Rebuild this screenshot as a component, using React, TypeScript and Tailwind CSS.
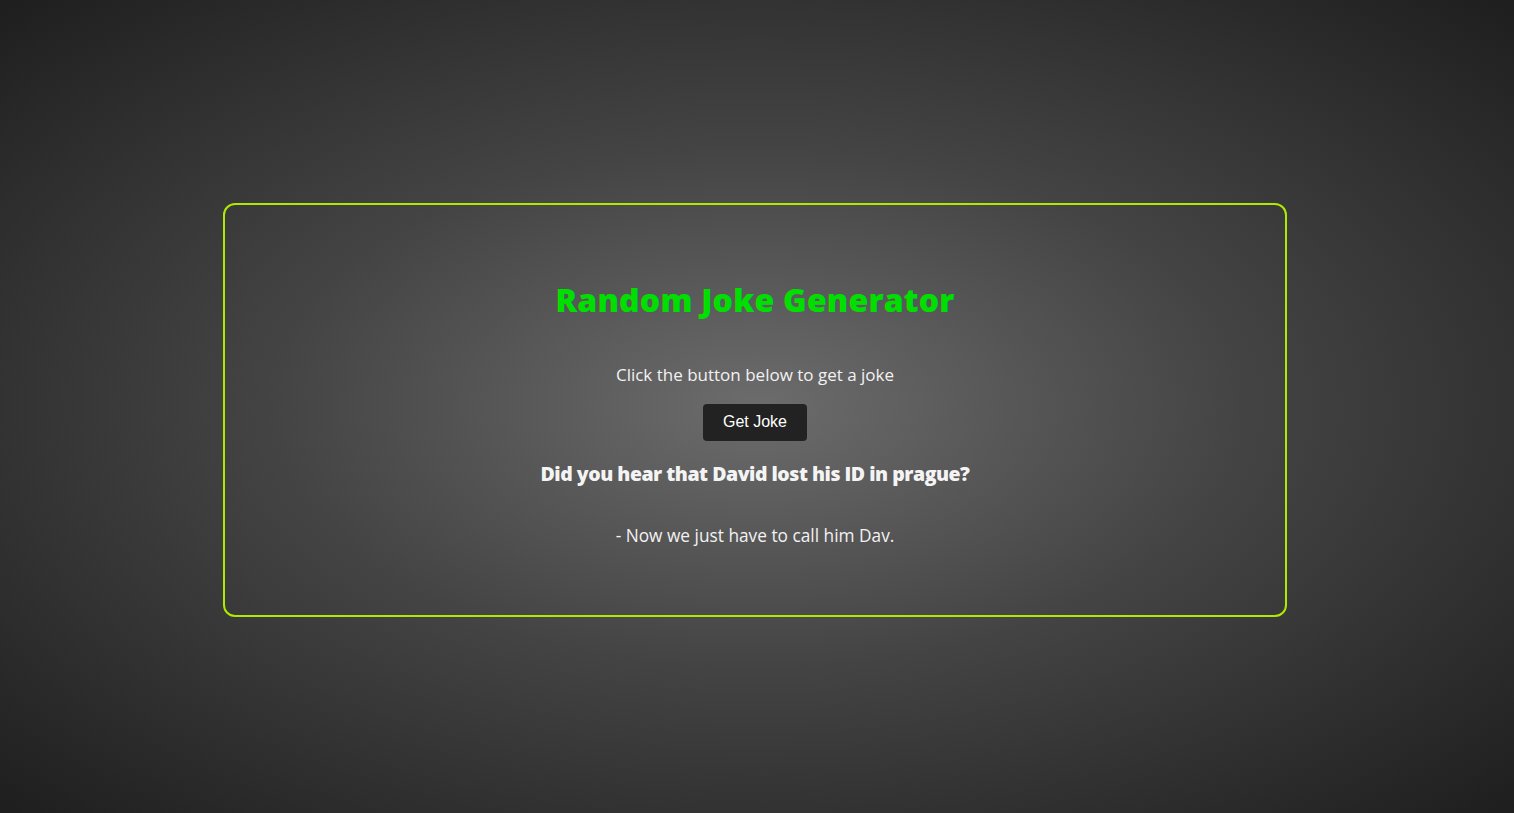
export default function App() {
  return (
    <div className="flex min-h-[813px] w-full items-center justify-center bg-[radial-gradient(ellipse_at_center,#6c6c6c_0%,#444_45%,#1e1e1e_100%)] pt-[6px] font-['Open_Sans',sans-serif]">
      {/* Card */}
      <div className="mr-[4px] flex w-[1064px] flex-col items-center rounded-xl border-2 border-[#aeea00] pt-[71px] pb-[66px]">
        <h1 className="text-[32px] leading-[48px] font-extrabold tracking-[0.2px] text-[#00e000]">
          Random Joke Generator
        </h1>
        <p className="mt-[38px] text-[17px] leading-[26px] text-[#f2f2f2]">
          Click the button below to get a joke
        </p>
        <button className="mt-4 h-[37px] w-[104px] rounded bg-[#222222] font-['Liberation_Sans',sans-serif] text-base text-white">
          Get Joke
        </button>
        <h2 className="mt-[18px] text-[19.5px] leading-[30px] font-extrabold tracking-tight text-[#f4f4f4]">
          Did you hear that David lost his ID in prague?
        </h2>
        <p className="mt-[34px] text-[17.3px] leading-[26px] text-[#f2f2f2]">
          - Now we just have to call him Dav.
        </p>
      </div>
    </div>
  );
}
